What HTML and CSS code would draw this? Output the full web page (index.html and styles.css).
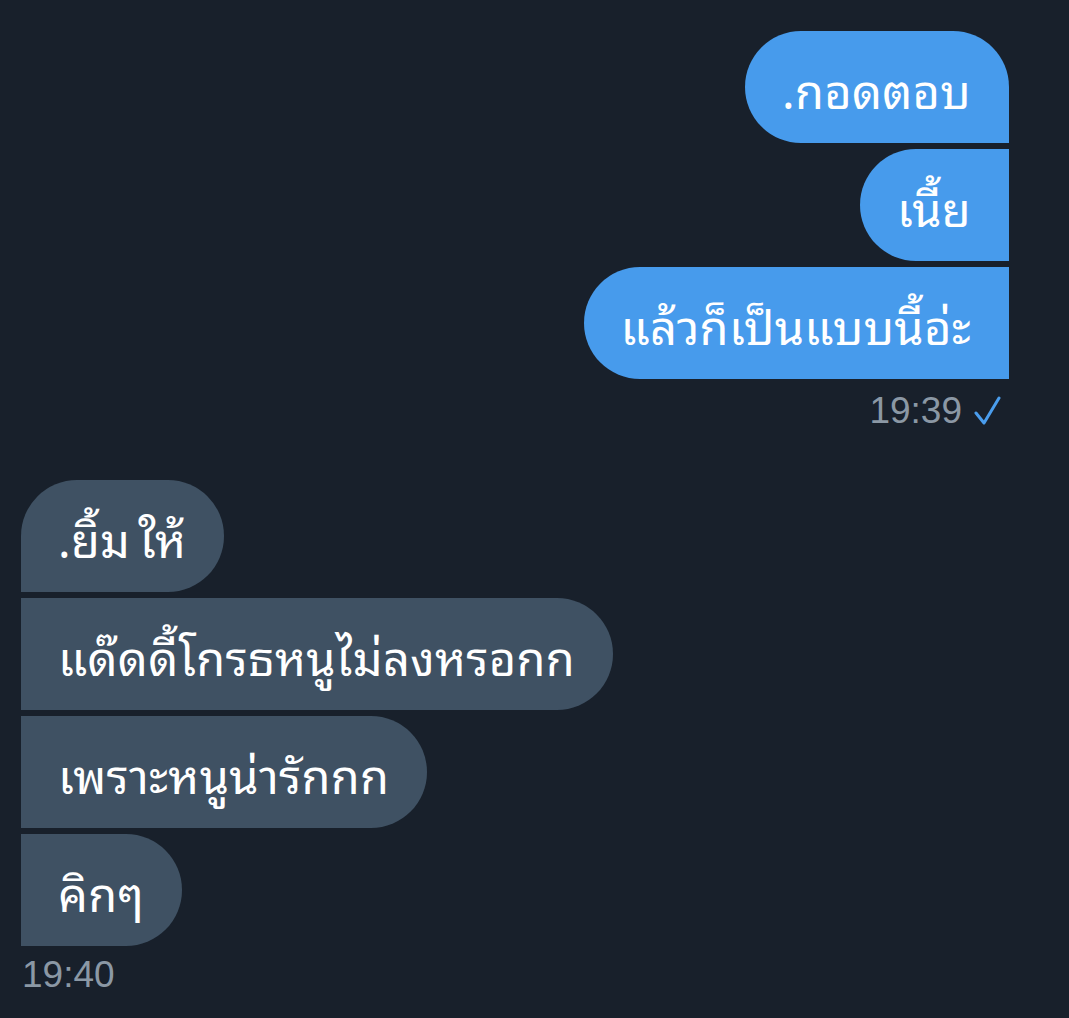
FILE: index.html
```html
<!DOCTYPE html>
<html lang="th">
<head>
<meta charset="utf-8">
<link rel="stylesheet" href="styles.css">
</head>
<body>
<div class="chat">
  <div class="group sent">
    <div class="bubble b-first">.กอดตอบ</div>
    <div class="bubble b-mid">เนี้ย</div>
    <div class="bubble b-last">แล้วก็เป็นแบบนี้อ่ะ</div>
    <div class="meta meta-sent">
      <span class="time">19:39</span>
      <svg class="check" width="28" height="30" viewBox="0 0 28 30"><polyline points="2,17 10,27 25,2" fill="none" stroke="#4a9ded" stroke-width="3" stroke-linecap="round" stroke-linejoin="round"/></svg>
    </div>
  </div>
  <div class="group recv">
    <div class="bubble b-first">.ยิ้ม<span class="lead">ให้</span></div>
    <div class="bubble b-mid">แด๊ดดี้โกรธหนูไม่ลงหรอกก</div>
    <div class="bubble b-mid">เพราะหนูน่ารักกก</div>
    <div class="bubble b-last">คิกๆ</div>
    <div class="meta meta-recv"><span class="time">19:40</span></div>
  </div>
</div>
</body>
</html>
```

FILE: styles.css
```css
html, body {
  margin: 0;
  padding: 0;
  background: #18202b;
}
body {
  width: 1069px;
  height: 1018px;
  overflow: hidden;
  font-family: "Noto Sans Thai Looped", "Noto Sans Thai", "Loma", "Garuda", "Noto Sans", "DejaVu Sans", sans-serif;
}
.chat {
  display: flex;
  flex-direction: column;
  padding: 31px 60px 0 21px;
}
.group {
  display: flex;
  flex-direction: column;
  gap: 6px;
}
.sent {
  align-items: flex-end;
}
.recv {
  align-items: flex-start;
  margin-top: 49px;
}
.bubble {
  height: 112px;
  box-sizing: border-box;
  display: flex;
  align-items: center;
  padding: 0 38px 0 37px;
  font-size: 47px;
  letter-spacing: 0.3px;
  color: #ffffff;
  white-space: nowrap;
}
.lead {
  margin-left: 8px;
}
.sent .bubble {
  background: #479bec;
  border-radius: 56px 0 0 56px;
}
.sent .b-first {
  border-radius: 56px 56px 0 56px;
}
.recv .bubble {
  background: #3f5163;
  border-radius: 0 56px 56px 0;
}
.recv .b-first {
  border-radius: 56px 56px 56px 0;
}
.meta {
  display: flex;
  align-items: center;
  gap: 12px;
  height: 40px;
  margin-top: 6px;
  font-family: "Liberation Sans", Arial, sans-serif;
  font-size: 37px;
  color: #8b98a5;
}
.meta-sent {
  padding-right: 7px;
}
.meta-recv {
  padding-left: 1px;
  margin-top: 3px;
}
.check {
  display: block;
}
```
